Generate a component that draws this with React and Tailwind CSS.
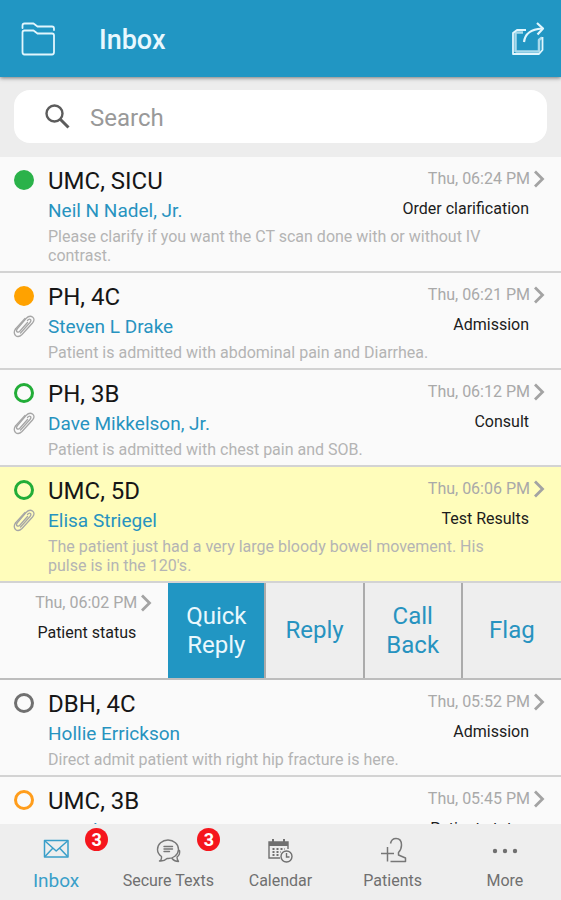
import React from 'react';

const messages = [
  { unit: 'UMC, SICU', sender: 'Neil N Nadel, Jr.', time: 'Thu, 06:24 PM', topic: 'Order clarification', dot: 'bg-[#2bb24a] border-[#2bb24a]', text: 'Please clarify if you want the CT scan done with or without IV contrast.' },
  { unit: 'PH, 4C', sender: 'Steven L Drake', time: 'Thu, 06:21 PM', topic: 'Admission', dot: 'bg-[#ffa200] border-[#ffa200]', clip: true, text: 'Patient is admitted with abdominal pain and Diarrhea.' },
  { unit: 'PH, 3B', sender: 'Dave Mikkelson, Jr.', time: 'Thu, 06:12 PM', topic: 'Consult', dot: 'border-[#22ad38]', clip: true, text: 'Patient is admitted with chest pain and SOB.' },
  { unit: 'UMC, 5D', sender: 'Elisa Striegel', time: 'Thu, 06:06 PM', topic: 'Test Results', dot: 'border-[#22ad38]', clip: true, highlight: true, text: "The patient just had a very large bloody bowel movement. His pulse is in the 120's." },
  { swiped: true, time: 'Thu, 06:02 PM', topic: 'Patient status' },
  { unit: 'DBH, 4C', sender: 'Hollie Errickson', time: 'Thu, 05:52 PM', topic: 'Admission', dot: 'border-[#707070]', text: 'Direct admit patient with right hip fracture is here.' },
  { unit: 'UMC, 3B', sender: 'Brandon D', time: 'Thu, 05:45 PM', topic: 'Patient status', dot: 'border-[#ff9d1c]' },
];

const actions = ['Quick Reply', 'Reply', 'Call Back', 'Flag'];

function FolderIcon() {
  return (
    <svg className="w-9 h-9" viewBox="0 0 36 36" fill="none" stroke="#e2f6fd" strokeWidth="1.8" strokeLinejoin="round" strokeLinecap="round">
      <path d="M2.500 7V4.500Q2.500 2.500 4.500 2.500H13.500L17.500 5.500H32Q34 5.500 34 7.500V9" />
      <path d="M2.500 31V11.500Q2.500 9.500 4.500 9.500H13.500L17.500 12.500H32Q34 12.500 34 14.500V31Q34 33.500 32 33.500H4.500Q2.500 33.500 2.500 31Z" />
    </svg>
  );
}

function ShareIcon() {
  return (
    <svg className="w-9 h-9" viewBox="0 0 36 36" fill="none" stroke="#e2f6fd" strokeWidth="1.8" strokeLinejoin="round">
      <path d="M17 9H8L4 12V33H30L33.500 29V16" />
      <path d="M6.500 31V11.500H14M6.500 30.500H30V19L33 16.500" strokeWidth="2.500" opacity=".7" />
      <path d="M15 21Q16.500 8.500 33 7.500" strokeWidth="2.200" />
      <path d="M28 2L34 7.500L28.500 13.500" strokeWidth="2.200" />
    </svg>
  );
}

function SearchIcon() {
  return (
    <svg className="w-7 h-7 shrink-0" viewBox="0 0 28 28" fill="none" stroke="#5c5c5c" strokeWidth="2.400">
      <circle cx="10.500" cy="10.500" r="8" />
      <path d="M16 16L24.500 24.500" strokeWidth="3" />
    </svg>
  );
}

function ClipIcon() {
  return (
    <svg className="w-6 h-6" viewBox="0 0 24 24" fill="none" stroke="#a6a6a6" strokeWidth="1.300" strokeLinecap="round">
      <path d="M15.500 8.500L8 17Q6 19 4.800 17.500Q4 16.500 5.500 14.500L14 4.500Q17.500 1 20.500 3Q23.500 5.500 20.500 9L10 20.500Q6.500 24 3.500 21.500Q1 18.500 3.500 15" />
      <path d="M3.500 15L13 4.500M8.500 19L18 8.500Q19.500 6.500 18.500 5.500Q17 4.500 15.500 6.500" />
    </svg>
  );
}

function Chevron() {
  return (
    <svg className="w-3 h-[18px] ml-[3px]" viewBox="0 0 12 18" fill="none" stroke="#a3a3a3" strokeWidth="2.800">
      <path d="M2 1.500L9.500 9L2 16.500" />
    </svg>
  );
}

function MailIcon() {
  return (
    <svg className="w-7 h-7" viewBox="0 0 28 28" fill="none" stroke="#3a9fc9" strokeWidth="1.500" strokeLinejoin="round">
      <rect x="2.500" y="4.500" width="23.500" height="16.500" />
      <path d="M3 5L14.200 15L25.500 5M3 20.500L10.500 12.500M25.500 20.500L18 12.500" />
    </svg>
  );
}

function ChatIcon() {
  return (
    <svg className="w-7 h-7" viewBox="0 0 28 28" fill="none" stroke="#777" strokeWidth="1.400" strokeLinejoin="round" strokeLinecap="round">
      <path d="M7.500 22V20.500Q3.500 17.500 3.500 13.500A10.500 9.500 0 0 1 24.500 13.500A10.500 9.500 0 0 1 13 22.500Q10 25.500 5.500 25Q7.500 24.500 7.500 22Z" />
      <path d="M10 10.500H18.500M10 13H18.500M10 15.500H15.500" />
      <path d="M25.500 14.500Q26.500 18.500 23 21Q23 23.500 24.500 25.500Q20.500 25.500 18 22.500" />
    </svg>
  );
}

function CalendarIcon() {
  return (
    <svg className="w-7 h-7" viewBox="0 0 28 28" fill="none" stroke="#707070" strokeWidth="1.400">
      <path d="M14 22H3V6H22V13" />
      <path d="M3 8H22" strokeWidth="4" />
      <path d="M7 3V9M18 3V9" strokeWidth="2" />
      <path d="M6.500 13H19M6.500 16H15M6.500 19H14" strokeWidth="2" strokeDasharray="2 2" />
      <circle cx="20.500" cy="20.500" r="5.500" />
      <path d="M20.500 17V21H23.500" />
    </svg>
  );
}

function PatientIcon() {
  return (
    <svg className="w-7 h-7" viewBox="0 0 28 28" fill="none" stroke="#777" strokeWidth="1.500" strokeLinejoin="round">
      <path d="M11.500 7.500Q12.500 2.500 17 2.500Q22.500 2.500 22.500 9Q22.500 13.500 19.500 16.500V19L26.500 22V25.500H11.500M2 17.500H15M8.500 11V25.500" />
    </svg>
  );
}

function MoreIcon() {
  return (
    <svg className="w-7 h-7" viewBox="0 0 28 28" fill="#707070">
      <circle cx="4" cy="15" r="2.200" />
      <circle cx="14" cy="15" r="2.200" />
      <circle cx="24" cy="15" r="2.200" />
    </svg>
  );
}

const tabs = [
  { name: 'Inbox', icon: MailIcon, count: 3, active: true },
  { name: 'Secure Texts', icon: ChatIcon, count: 3 },
  { name: 'Calendar', icon: CalendarIcon },
  { name: 'Patients', icon: PatientIcon },
  { name: 'More', icon: MoreIcon },
];

function MessageMeta({ time, topic }) {
  return (
    <div className="shrink-0 flex flex-col items-end pr-4">
      <div className="flex items-center h-5 text-base text-[#a9a9a9]">
        <span>{time}</span>
        <Chevron />
      </div>
      <div className="mt-2 pr-4 text-base leading-6 text-[#1c1c1c]">{topic}</div>
    </div>
  );
}

function MessageRow({ message }) {
  return (
    <li className={`border-b-2 border-[#d3d3d3] pt-3 pb-1.5 ${message.highlight ? 'bg-[#fffdbb]' : 'bg-[#fafafa]'}`}>
      <div className="flex">
        <div className="w-12 shrink-0 flex flex-col items-center gap-2">
          <span className={`mt-px w-5 h-5 rounded-full border-3 ${message.dot}`} />
          {message.clip && <ClipIcon />}
        </div>
        <div className="flex-1 min-w-0">
          <h2 className="text-2xl leading-6 text-[#161616]">{message.unit}</h2>
          <p className="mt-1.5 text-[19px] leading-6 text-[#2793c0]">{message.sender}</p>
        </div>
        <MessageMeta time={message.time} topic={message.topic} />
      </div>
      {message.text && (
        <p className="mt-1 pl-12 pr-14 text-base leading-[19px] text-[#b4b4b4]">{message.text}</p>
      )}
    </li>
  );
}

function SwipedRow({ message }) {
  return (
    <li className="flex h-[97px] border-b-2 border-[#bdbdbd] bg-[#fafafa]">
      <div className="w-[30%] flex justify-end pt-2.5">
        <MessageMeta time={message.time} topic={message.topic} />
      </div>
      <div className="flex-1 grid grid-cols-4">
        {actions.map((action, i) => (
          <button key={action} type="button"
            className={`px-3 text-2xl leading-[29px] border-r-2 border-[#ababab] last:border-r-0 ${i === 0 ? 'bg-[#2196c3] text-[#eaf8fd]' : 'bg-[#eee] text-[#2793c0]'}`}>
            {action}
          </button>
        ))}
      </div>
    </li>
  );
}

export default function App() {
  return (
    <div className="h-screen flex flex-col overflow-hidden bg-[#ededed] font-['Roboto',sans-serif]">
      <header className="relative shrink-0 flex items-center h-[77px] pl-5 pr-4 bg-[#2196c3] shadow-[0_1px_4px_rgba(0,0,0,0.5)]">
        <button type="button" aria-label="Folders"><FolderIcon /></button>
        <h1 className="flex-1 ml-[43px] pt-[3px] text-[27px] font-medium text-[#e9f8fe]">Inbox</h1>
        <button type="button" aria-label="Share"><ShareIcon /></button>
      </header>
      <div className="shrink-0 px-[14px] pt-[13px] pb-[14px]">
        <label className="flex items-center gap-[18px] h-[53px] pl-[30px] pr-4 rounded-2xl bg-white">
          <SearchIcon />
          <input type="text" aria-label="Search" placeholder="Search" className="flex-1 min-w-0 pt-[2px] text-2xl outline-none placeholder:text-[#999]" />
        </label>
      </div>
      <ul className="flex-1 min-h-0 overflow-hidden">
        {messages.map((message) => message.swiped
          ? <SwipedRow key={message.time} message={message} />
          : <MessageRow key={message.time} message={message} />)}
      </ul>
      <nav className="shrink-0 grid grid-cols-5 h-[76px] bg-[#eee]">
        {tabs.map(({ name, icon: Icon, count, active }) => (
          <a key={name} href="#" className={`relative flex flex-col items-center pt-3 ${active ? 'text-[#3a9fc9]' : 'text-[#707070]'}`}>
            <Icon />
            <span className={`mt-[5px] leading-6 ${active ? 'text-[19px]' : 'text-base'}`}>{name}</span>
            {count && (
              <span className="absolute top-1 right-1 w-[23px] h-[23px] flex items-center justify-center rounded-full bg-[#f5161d] text-lg font-bold text-white">{count}</span>
            )}
          </a>
        ))}
      </nav>
    </div>
  );
}
